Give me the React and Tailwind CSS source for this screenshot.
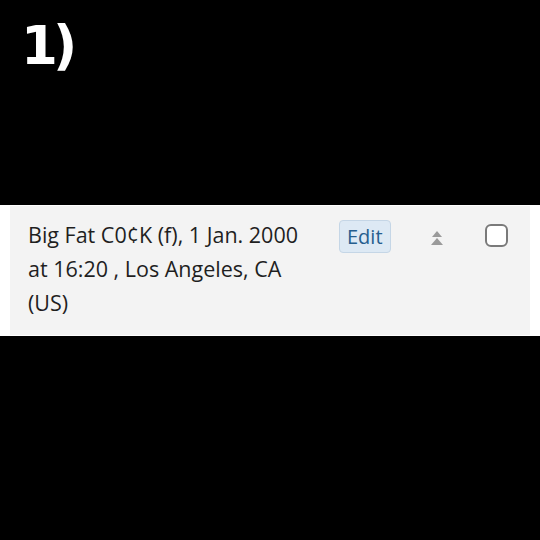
export default function App() {
  return (
    <div className="w-[540px] h-[540px] bg-black overflow-hidden">
      <div className="h-[205px] pl-[21px] pt-[19px]">
        <span
          className="text-white font-bold text-[53px] leading-none tracking-[-5px]"
          style={{ fontFamily: '"DejaVu Sans", sans-serif' }}
        >
          1)
        </span>
      </div>
      <div className="bg-white px-[10px] pt-[1px] pb-[1px]">
        <div
          className="bg-[#f3f3f3] flex items-start h-[129px] pl-[18px] pt-[12px]"
          style={{ fontFamily: '"Open Sans", sans-serif' }}
        >
          <div className="w-[292px] text-[21.5px] leading-[34px] text-[#1f1f1f]">
            Big Fat C0¢K (f), 1 Jan. 2000 at 16:20 , Los Angeles, CA (US)
          </div>
          <div className="ml-[19px] mt-[2px] h-[33px] px-[7px] flex items-center rounded-[4px] border border-[#c5d6e6] bg-[#dde9f4] text-[#265e8e] text-[20px]">
            Edit
          </div>
          <div className="ml-[40px] mt-[13px] flex flex-col items-center">
            <svg width="12" height="14" viewBox="0 0 12 14">
              <path d="M6 0 L11 6 H1 Z" fill="#9a9a9a" />
              <path d="M6 7 L12 14 H0 Z" fill="#9a9a9a" />
            </svg>
          </div>
          <div className="ml-[42px] mt-[6px] w-[23px] h-[23px] rounded-[6px] border-2 border-[#7a7a7a] bg-white" />
        </div>
      </div>
    </div>
  );
}
